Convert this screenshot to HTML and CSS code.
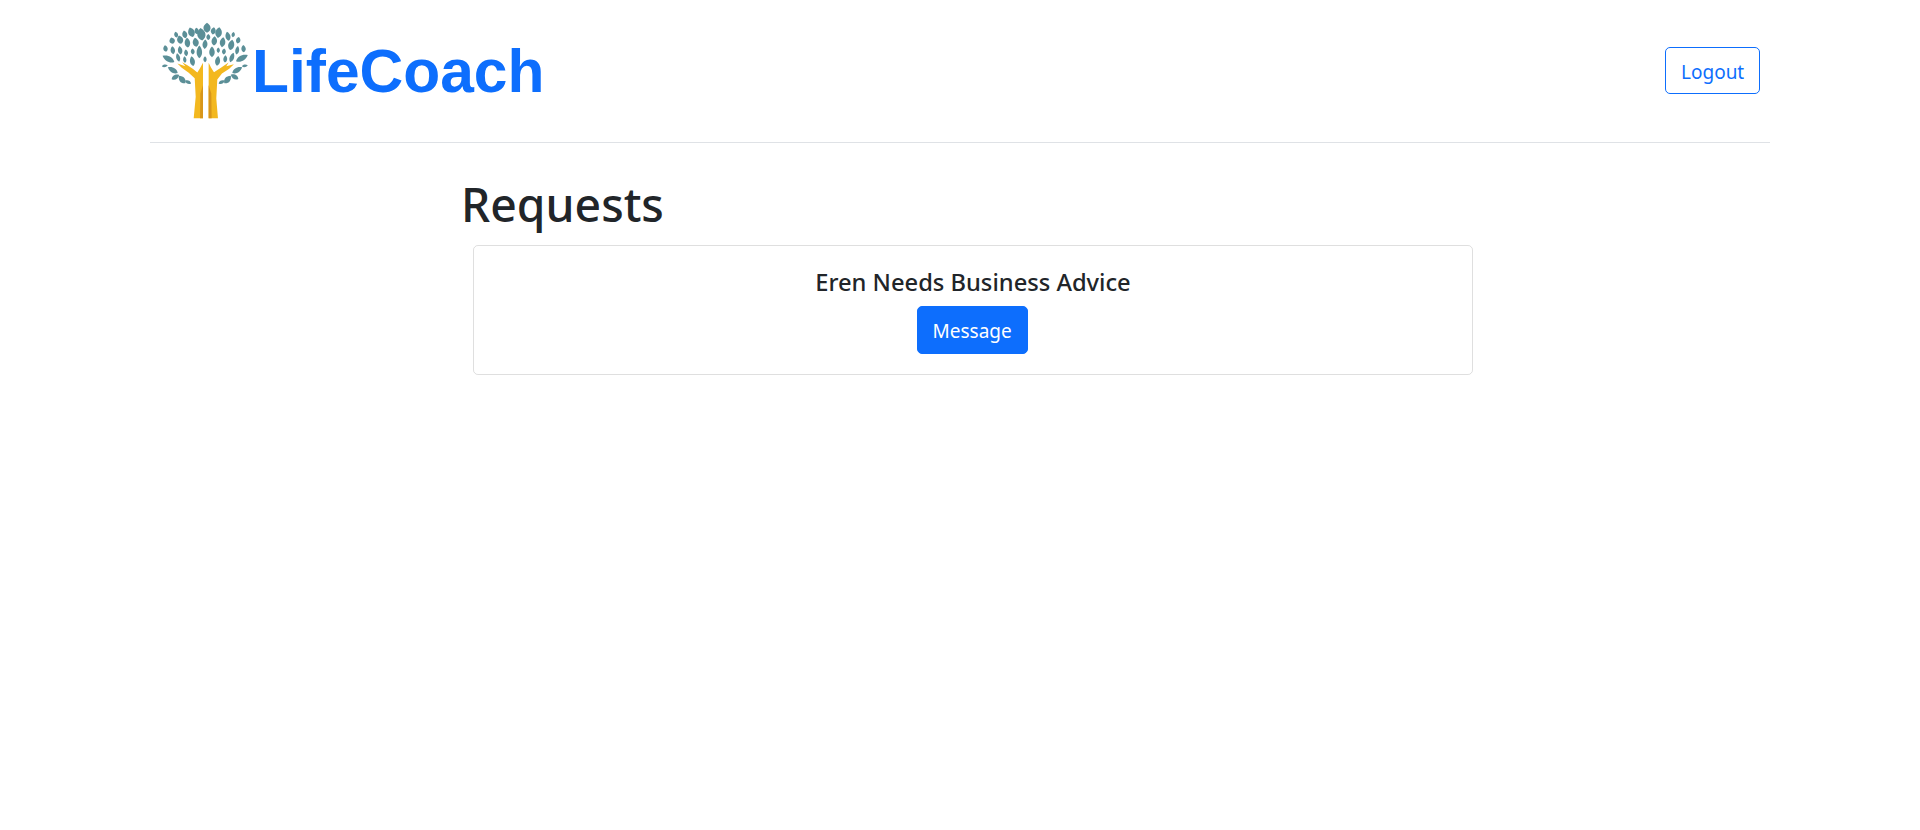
FILE: index.html
```html
<!DOCTYPE html>
<html lang="en">
<head>
<meta charset="utf-8">
<title>LifeCoach</title>
<link rel="stylesheet" href="styles.css">
</head>
<body>
<div class="page">
  <header class="topbar">
    <a class="brand" href="#">
      <svg class="brand-mark" viewBox="30 35 270 295" aria-hidden="true">
        <defs><path id="leaf" d="M0-1C1.1-.4 1.1.55 0 1C-1.1.55-1.1-.4 0-1Z"/></defs>
        <g class="leaves">
          <use href="#leaf" transform="translate(171 52) scale(13 15)"/>
          <use href="#leaf" transform="translate(154 72) rotate(-8) scale(15 19)"/>
          <use href="#leaf" transform="translate(190 62) rotate(10) scale(9 11)"/>
          <use href="#leaf" transform="translate(206 67) rotate(8) scale(12 16)"/>
          <use href="#leaf" transform="translate(124 66) rotate(-18) scale(12 15)"/>
          <use href="#leaf" transform="translate(140 62) rotate(-10) scale(8 10)"/>
          <use href="#leaf" transform="translate(104 72) rotate(-12) scale(9 12)"/>
          <use href="#leaf" transform="translate(78 73) rotate(-15) scale(7 9)"/>
          <use href="#leaf" transform="translate(66 91) rotate(-15) scale(10 10)"/>
          <use href="#leaf" transform="translate(90 88) rotate(-15) scale(11 13)"/>
          <use href="#leaf" transform="translate(112 97) rotate(-5) scale(10 15)"/>
          <use href="#leaf" transform="translate(137 96) rotate(-10) scale(11 14)"/>
          <use href="#leaf" transform="translate(175 80) rotate(0) scale(7 9)"/>
          <use href="#leaf" transform="translate(165 102) rotate(5) scale(9 14)"/>
          <use href="#leaf" transform="translate(193 92) rotate(5) scale(10 14)"/>
          <use href="#leaf" transform="translate(218 96) rotate(8) scale(10 15)"/>
          <use href="#leaf" transform="translate(234 78) rotate(-12) scale(9 14)"/>
          <use href="#leaf" transform="translate(250 73) rotate(10) scale(6 8)"/>
          <use href="#leaf" transform="translate(265 90) rotate(12) scale(8 10)"/>
          <use href="#leaf" transform="translate(244 104) rotate(12) scale(11 16)"/>
          <use href="#leaf" transform="translate(281 115) rotate(-5) scale(8 11)"/>
          <use href="#leaf" transform="translate(262 120) rotate(10) scale(7 13)"/>
          <use href="#leaf" transform="translate(276 144) rotate(62) scale(10 20)"/>
          <use href="#leaf" transform="translate(246 142) rotate(20) scale(8 15)"/>
          <use href="#leaf" transform="translate(222 124) rotate(5) scale(7 9)"/>
          <use href="#leaf" transform="translate(186 125) rotate(0) scale(10 16)"/>
          <use href="#leaf" transform="translate(205 120) rotate(0) scale(6 8)"/>
          <use href="#leaf" transform="translate(203 152) rotate(8) scale(9 15)"/>
          <use href="#leaf" transform="translate(226 146) rotate(5) scale(7 11)"/>
          <use href="#leaf" transform="translate(148 125) rotate(0) scale(10 19)"/>
          <use href="#leaf" transform="translate(128 124) rotate(-5) scale(7 9)"/>
          <use href="#leaf" transform="translate(108 128) rotate(-5) scale(7 10)"/>
          <use href="#leaf" transform="translate(68 120) rotate(-8) scale(8 12)"/>
          <use href="#leaf" transform="translate(90 120) rotate(-8) scale(8 13)"/>
          <use href="#leaf" transform="translate(46 115) rotate(-10) scale(8 10)"/>
          <use href="#leaf" transform="translate(55 146) rotate(-62) scale(10 20)"/>
          <use href="#leaf" transform="translate(84 142) rotate(-15) scale(7 13)"/>
          <use href="#leaf" transform="translate(127 153) rotate(-10) scale(9 15)"/>
          <use href="#leaf" transform="translate(104 148) rotate(-5) scale(6 10)"/>
          <use href="#leaf" transform="translate(165 147) rotate(0) scale(6 9)"/>
          <use href="#leaf" transform="translate(44 167) rotate(80) scale(5 9)"/>
          <use href="#leaf" transform="translate(68 180) rotate(-60) scale(9 17)"/>
          <use href="#leaf" transform="translate(76 201) rotate(60) scale(8 13)"/>
          <use href="#leaf" transform="translate(96 208) rotate(-40) scale(10 15)"/>
          <use href="#leaf" transform="translate(114 216) rotate(-65) scale(6 10)"/>
          <use href="#leaf" transform="translate(285 167) rotate(80) scale(5 9)"/>
          <use href="#leaf" transform="translate(262 180) rotate(60) scale(9 17)"/>
          <use href="#leaf" transform="translate(254 200) rotate(-60) scale(8 13)"/>
          <use href="#leaf" transform="translate(233 208) rotate(40) scale(10 15)"/>
          <use href="#leaf" transform="translate(215 216) rotate(65) scale(6 10)"/>
        </g>
        <path class="arm" d="M159 325V158L150 174L142 187L128 176L112 165L96 156L106 168L82 160L94 172L116 188L134 204L137 260L131 325Z"/>
        <path class="arm" d="M176 325V158L183 172L192 186L214 172L236 157L229 168L252 162L238 176L216 190L202 208L199 265L204 325Z"/>
        <path class="arm-shade" d="M150 325L151 250L159 225V325Z"/>
        <path class="arm-shade" d="M185 325L184 250L176 225V325Z"/>
      </svg>
      <span class="brand-name">LifeCoach</span>
    </a>
    <button class="btn btn-outline" type="button">Logout</button>
  </header>
  <main class="requests">
    <h1 class="requests-title">Requests</h1>
    <section class="card">
      <h5 class="card-title">Eren Needs Business Advice</h5>
      <button class="btn btn-primary" type="button">Message</button>
    </section>
  </main>
</div>
</body>
</html>
```

FILE: styles.css
```css
* { box-sizing: border-box; }
html, body { margin: 0; padding: 0; background: #fff; }
body {
  font-family: "Noto Sans", "Open Sans", sans-serif;
  color: #212529;
  font-size: 20px;
}
.page { padding: 0 150px; }
.topbar {
  display: flex;
  justify-content: space-between;
  align-items: center;
  height: 143px;
  padding: 0 10px;
  border-bottom: 1px solid #dfe2e6;
}
.brand {
  display: flex;
  align-items: center;
  text-decoration: none;
  color: #0d6efd;
}
.brand-mark { width: 90px; height: 98px; display: block; }
.brand-name {
  font-family: "Liberation Sans", Arial, sans-serif;
  font-weight: 700;
  font-size: 60.5px;
  line-height: 1;
  margin-left: 2px;
}
.leaves { fill: #5b8f97; }
.arm { fill: #f3b81f; }
.arm-shade { fill: #d8961a; }
.btn {
  font-family: inherit;
  font-size: 19px;
  line-height: 30px;
  border-radius: 5px;
  cursor: pointer;
  background: transparent;
}
.btn-outline {
  padding: 9px 15px 5px;
  color: #0d6efd;
  border: 1.25px solid #0d6efd;
  height: 47px;
  width: 95px;
  margin-top: -2px;
}
.btn-primary {
  padding: 8px 15px 6px;
  color: #fff;
  background: #0d6efd;
  border: 1px solid #0d6efd;
  height: 48px;
  width: 111px;
  margin-right: 2px;
}
.requests { margin-left: 311px; width: 1024px; padding-top: 32px; }
.requests-title {
  margin: 0;
  font-size: 46.3px;
  font-weight: 500;
  line-height: 60px;
  padding-bottom: 10px;
}
.card {
  margin-left: 12px;
  width: 1000px;
  height: 130px;
  border: 1.25px solid rgba(0, 0, 0, .125);
  border-radius: 5px;
  text-align: center;
  padding-top: 21px;
}
.card-title {
  margin: 0 0 9px;
  font-size: 23.7px;
  font-weight: 500;
  line-height: 30px;
}
```
